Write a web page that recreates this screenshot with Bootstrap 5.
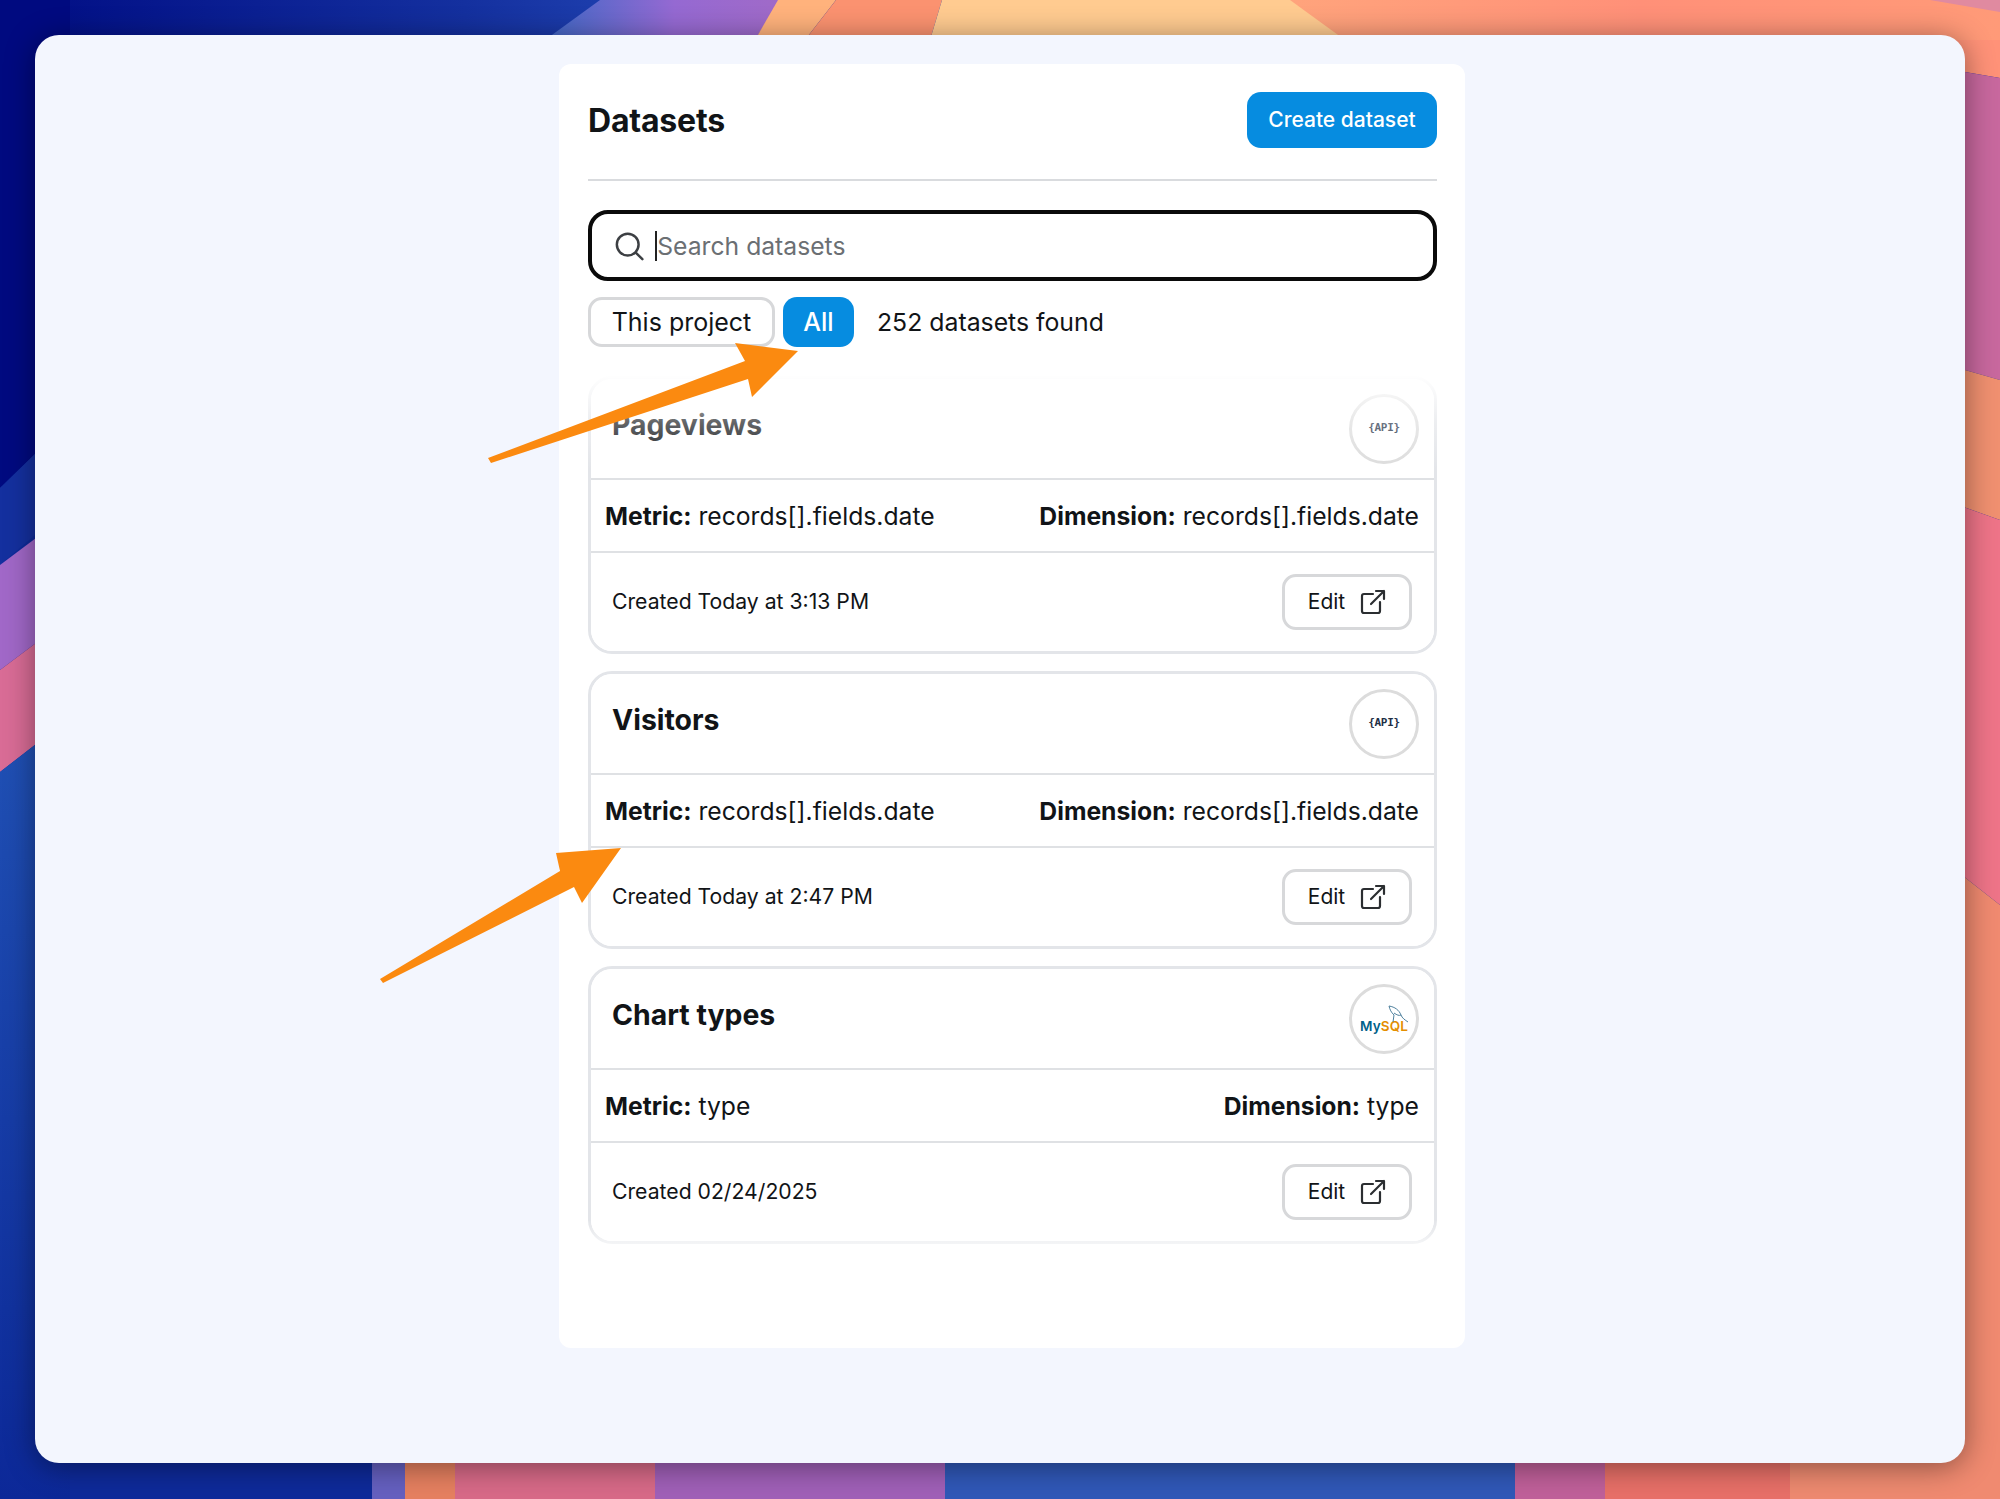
<!DOCTYPE html>
<html lang="en">
<head>
<meta charset="UTF-8">
<title>Datasets</title>
<link href="https://cdn.jsdelivr.net/npm/bootstrap@5.3.0/dist/css/bootstrap.min.css" rel="stylesheet">
<style>
    body { margin: 0; height: 1499px; background: #0e2a9a; font-family: Inter, "Liberation Sans", sans-serif; color: #111417; position: relative; overflow: hidden; }
    .wallpaper, .arrows { position: absolute; left: 0; top: 0; }
    .arrows { z-index: 5; pointer-events: none; }
    .desk { position: relative; padding: 35px; height: 1499px; }
    .app-window { height: 1428px; background: #f3f6fe; border-radius: 24px; box-shadow: 0 4px 30px rgba(0,0,0,.42); padding: 29px 0 0 524px; }
    .panel { width: 906px; height: 1284px; background: #fff; border-radius: 12px; padding: 28px 28px 28px 29px; }
    .panel-title { font-size: 32px; font-weight: 700; letter-spacing: -.2px; margin: 0; padding-top: 2px; }
    .btn-create { background: #068ce0; color: #fff; border: 0; border-radius: 14px; height: 56px; width: 190px; font-size: 21px; font-weight: 500; padding: 0; }
    .btn-create:hover { background: #068ce0; color: #fff; }
    .panel-rule { border-top: 2px solid #d9dbde; opacity: 1; margin: 31px 0 29px; }
    .search-box { height: 71px; border: 4px solid #0a0a0a; border-radius: 20px; padding: 0 22px; gap: 11px; }
    .search-caret { width: 2px; height: 30px; background: #222; margin-right: -11px; flex: none; }
    .search-box input { border: 0; outline: 0; padding: 2px 0 0; font-size: 24.7px; background: transparent; box-shadow: none; }
    .search-box input::placeholder { color: #6b6f73; opacity: 1; }
    .filter-row { margin-top: 16px; height: 50px; gap: 8px; }
    .chip { height: 50px; font-size: 25px; border-radius: 14px; padding: 0; line-height: 1; }
    .chip-off { width: 187px; border: 3px solid #d7d8da; background: #fff; color: #111417; }
    .chip-on { width: 71px; border: 0; background: #068ce0; color: #fff; font-weight: 500; }
    .found-count { font-size: 24.8px; margin-left: 15px; padding-top: 1px; }
    .set-list { position: relative; margin-top: 29px; gap: 17px; }
    .set-list::before { content: ""; position: absolute; left: 0; right: 0; top: -2px; height: 96px; z-index: 2; background: linear-gradient(#fff 0, rgba(255,255,255,.35) 50%, rgba(255,255,255,0)); }
    .set-list::after { content: ""; position: absolute; left: 0; right: 0; bottom: 0; height: 24px; z-index: 2; background: linear-gradient(rgba(255,255,255,0), rgba(255,255,255,.6)); }
    .set-card { height: 278px; border: 3px solid #e3e5e9; border-radius: 24px; overflow: hidden; }
    .set-card .card-header { height: 101px; background: #fff; border-bottom: 2px solid #dfe1e4; padding: 0 15px 0 21px; }
    .set-name { font-size: 28.4px; font-weight: 700; margin: 0 0 6px; }
    .src-logo { width: 70px; height: 70px; border: 3px solid #dcdcdc; border-radius: 50%; background: #fff; position: relative; }
    .api-tag { font-family: "DejaVu Sans Mono", "Liberation Mono", monospace; font-size: 11px; font-weight: 700; color: #1e2f45; letter-spacing: -.3px; }
    .mysql-tag { font-size: 13.5px; font-weight: 600; line-height: 1; margin-top: 17px; letter-spacing: .1px; }
    .mysql-my { color: #00618a; }
    .mysql-sql { color: #e48e00; }
    .dolphin { position: absolute; left: 36px; top: 18px; }
    .set-card .card-body { height: 73px; flex: none; padding: 2px 15px 0 14px; border-bottom: 2px solid #dfe1e4; font-size: 24.7px; }
    .set-card .card-body b { font-weight: 700; }
    .set-card .card-footer { flex: 1; background: #fff; border: 0; padding: 0 22px 0 21px; font-size: 21.2px; }
    .btn-edit { width: 130px; height: 56px; border: 3px solid #d7d8da; border-radius: 14px; background: #fff; color: #111417; font-size: 21px; gap: 15px; padding: 0; }
</style>
</head>
<body>

<!-- wallpaper behind the window, only the edges show -->
<svg class="wallpaper" width="2000" height="1499" viewBox="0 0 2000 1499">
    <defs>
        <linearGradient id="navy" x1="0" y1="0" x2="1" y2="0">
            <stop offset="0" stop-color="#000c84"/><stop offset=".75" stop-color="#14309f"/><stop offset="1" stop-color="#1e3fae"/>
        </linearGradient>
        <linearGradient id="blueToPurple" x1="0" y1="0" x2="1" y2="0">
            <stop offset="0" stop-color="#3f68c6"/><stop offset=".55" stop-color="#9569d2"/><stop offset="1" stop-color="#a06ac8"/>
        </linearGradient>
        <linearGradient id="blueLeft" x1="0" y1="0" x2="0" y2="1">
            <stop offset="0" stop-color="#2050b4"/><stop offset="1" stop-color="#0c2898"/>
        </linearGradient>
        <linearGradient id="salmon" x1="0" y1="0" x2="1" y2="0">
            <stop offset="0" stop-color="#ffa47c"/><stop offset=".5" stop-color="#ff9078"/><stop offset="1" stop-color="#ff9a78"/>
        </linearGradient>
    </defs>
    <rect width="2000" height="1499" fill="#0e2a9a"/>
    <!-- top edge -->
    <rect width="620" height="40" fill="url(#navy)"/>
    <polygon points="600,0 780,0 755,40 545,40" fill="url(#blueToPurple)"/>
    <polygon points="778,0 836,0 805,40 755,40" fill="#ffb27c"/>
    <polygon points="836,0 942,0 930,40 805,40" fill="#fb9270"/>
    <rect x="1280" y="0" width="720" height="40" fill="url(#salmon)"/>
    <polygon points="942,0 1290,0 1345,40 930,40" fill="#ffcb90"/>
    <polygon points="1930,0 2000,0 2000,12" fill="#e08aa0"/>
    <!-- left edge -->
    <polygon points="0,0 70,0 70,420 0,488" fill="#000a80"/>
    <polygon points="0,488 70,420 70,505 0,565" fill="#14309f"/>
    <polygon points="0,565 40,535 40,640 0,670" fill="#a168c8"/>
    <polygon points="0,670 40,640 40,741 0,772" fill="#d96c96"/>
    <polygon points="0,772 40,741 70,741 70,1499 0,1499" fill="url(#blueLeft)"/>
    <!-- bottom edge -->
    <rect x="372" y="1455" width="35" height="44" fill="#6560c0"/>
    <rect x="405" y="1455" width="52" height="44" fill="#e68060"/>
    <rect x="455" y="1455" width="202" height="44" fill="#d86a88"/>
    <rect x="655" y="1455" width="292" height="44" fill="#a060b8"/>
    <rect x="945" y="1455" width="572" height="44" fill="#3058b8"/>
    <rect x="1515" y="1455" width="92" height="44" fill="#c0609a"/>
    <rect x="1605" y="1455" width="187" height="44" fill="#e87068"/>
    <rect x="1790" y="1455" width="210" height="44" fill="#ee8a70"/>
    <!-- right edge -->
    <polygon points="1930,40 2000,40 2000,78 1930,66" fill="#ff9278"/>
    <polygon points="1930,66 2000,78 2000,380 1930,360" fill="#c8689e"/>
    <polygon points="1930,360 2000,380 2000,520 1930,495" fill="#f09070"/>
    <polygon points="1930,495 2000,520 2000,905 1930,850" fill="#ee7488"/>
    <polygon points="1930,850 2000,905 2000,1499 1930,1499" fill="#f08a70"/>
</svg>

<div class="desk">
    <div class="app-window">
        <div class="panel">
            <div class="d-flex justify-content-between align-items-center">
                <h2 class="panel-title">Datasets</h2>
                <button class="btn btn-create">Create dataset</button>
            </div>
            <hr class="panel-rule">

            <div class="search-box d-flex align-items-center">
                <svg width="32" height="32" viewBox="0 0 32 32" fill="none" stroke="#3c3f43" stroke-width="2.6" stroke-linecap="round"><circle cx="14.5" cy="14.5" r="11.5"/><path d="M23 23l7 7"/></svg>
                <span class="search-caret"></span>
                <input type="text" class="form-control" placeholder="Search datasets">
            </div>

            <div class="filter-row d-flex align-items-center">
                <button class="btn chip chip-off">This project</button>
                <button class="btn chip chip-on">All</button>
                <span class="found-count">252 datasets found</span>
            </div>

            <div class="set-list d-flex flex-column" id="setList"></div>
        </div>
    </div>
</div>

<svg class="arrows" width="2000" height="1499" viewBox="0 0 2000 1499">
    <polygon points="488,458 745,361 735,343 798,351 752,397 748,379 491,463" fill="#fb8a10"/>
    <polygon points="380,979 560,871 556,853 621,848 582,903 574,887 383,983" fill="#fb8a10"/>
</svg>

<script>
    const apiLogo = `<span class="api-tag">{API}</span>`;
    const mysqlLogo = `<svg class="dolphin" width="22" height="20" viewBox="0 0 22 20" fill="none" stroke="#4d7f9c" stroke-width="1"><path d="M1 1c6 1 10 4 12 9 1 3 4 5 7 7M1 1c1 4 2 6 5 9l-1 7M6 8c3 2 5 3 7 2"/></svg>
        <span class="mysql-tag"><span class="mysql-my">My</span><span class="mysql-sql">SQL</span></span>`;

    const sets = [
        { name: "Pageviews", logo: apiLogo, metric: "records[].fields.date", dim: "records[].fields.date", created: "Created Today at 3:13 PM" },
        { name: "Visitors", logo: apiLogo, metric: "records[].fields.date", dim: "records[].fields.date", created: "Created Today at 2:47 PM" },
        { name: "Chart types", logo: mysqlLogo, metric: "type", dim: "type", created: "Created 02/24/2025" }
    ];

    const editIcon = `<svg width="26" height="26" viewBox="0 0 26 26" fill="none" stroke="#2b2e31" stroke-width="2.2" stroke-linecap="round" stroke-linejoin="round"><path d="M13 5H4a2 2 0 0 0-2 2v15a2 2 0 0 0 2 2h14a2 2 0 0 0 2-2v-9M11 15L24 2M16 2h8v8"/></svg>`;

    document.getElementById("setList").innerHTML = sets.map(s => `
        <div class="card set-card">
            <div class="card-header d-flex justify-content-between align-items-center">
                <h3 class="set-name">${s.name}</h3>
                <div class="src-logo d-flex align-items-center justify-content-center">${s.logo}</div>
            </div>
            <div class="card-body d-flex justify-content-between align-items-center">
                <span><b>Metric:</b> ${s.metric}</span>
                <span><b>Dimension:</b> ${s.dim}</span>
            </div>
            <div class="card-footer d-flex justify-content-between align-items-center">
                <span>${s.created}</span>
                <button class="btn btn-edit d-flex align-items-center justify-content-center">Edit ${editIcon}</button>
            </div>
        </div>`).join("");
</script>

<script src="https://cdn.jsdelivr.net/npm/bootstrap@5.3.0/dist/js/bootstrap.bundle.min.js"></script>
</body>
</html>
